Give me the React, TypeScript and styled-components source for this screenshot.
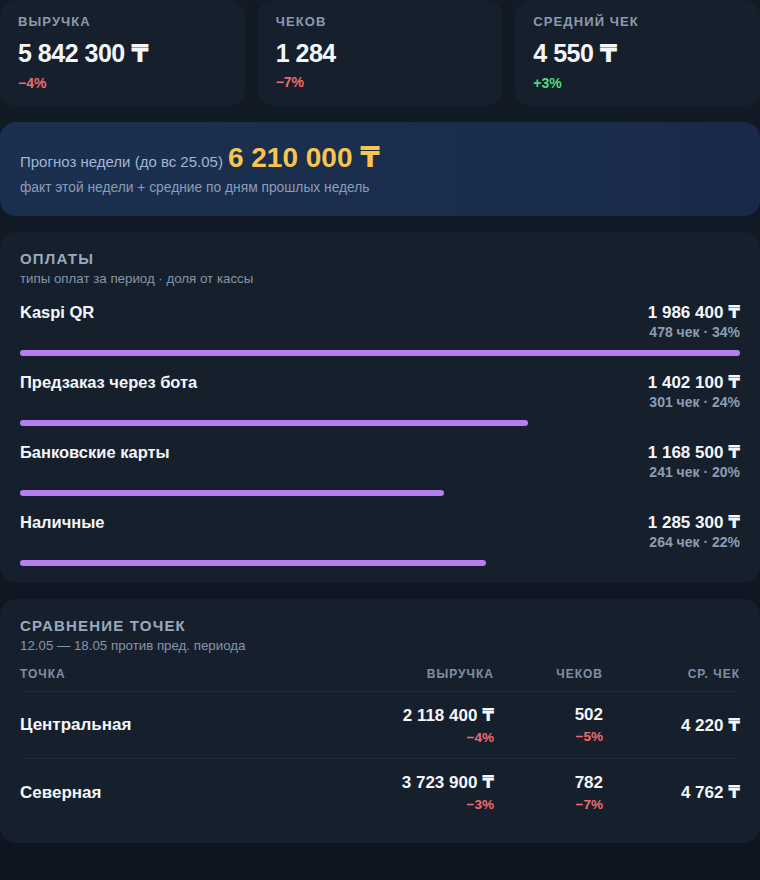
import React from "react";
import styled, { createGlobalStyle } from "styled-components";

const Global = createGlobalStyle`
  html, body { margin: 0; padding: 0; background: #0e1620; }
  body { font-family: "Liberation Sans", Arial, sans-serif; color: #f2f5f9; }
  * { box-sizing: border-box; }
`;

const Page = styled.div`
  width: 760px;
  min-height: 880px;
  background: linear-gradient(180deg, #111a25 0%, #0e1520 100%);
  display: flex;
  flex-direction: column;
  gap: 16px;
`;

const StatsGrid = styled.div`
  display: grid;
  grid-template-columns: repeat(3, 1fr);
  gap: 13px;
`;

const StatCard = styled.div`
  background: #16202c;
  border-radius: 16px;
  height: 106px;
  padding: 14px 18px;
  display: flex;
  flex-direction: column;
`;

const StatLabel = styled.div`
  font-size: 13px;
  font-weight: 700;
  letter-spacing: 1.1px;
  color: #8b9ab0;
  text-transform: uppercase;
  line-height: 16px;
`;

const StatValue = styled.div`
  font-size: 25px;
  font-weight: 700;
  color: #f4f6fa;
  letter-spacing: -0.5px;
  margin-top: 8px;
  line-height: 30px;
`;

const Delta = styled.div<{ $pos?: boolean }>`
  font-size: 14px;
  font-weight: 700;
  color: ${(p) => (p.$pos ? "#4ade80" : "#ef6b6b")};
  margin-top: 6px;
  line-height: 16px;
`;

const Forecast = styled.div`
  background: linear-gradient(90deg, #1b2f4f 0%, #1a2d4c 60%, #19294a 100%);
  border-radius: 16px;
  height: 94px;
  padding: 19px 20px 0;
`;

const ForecastLine = styled.div`
  display: flex;
  align-items: baseline;
  gap: 5px;
`;

const ForecastLabel = styled.span`
  font-size: 15px;
  color: #a3b5d3;
`;

const ForecastValue = styled.span`
  font-size: 28px;
  font-weight: 700;
  color: #f7c550;
`;

const ForecastNote = styled.div`
  font-size: 13.8px;
  color: #8c9db7;
  margin-top: 6px;
`;

const Panel = styled.div`
  background: #16202c;
  border-radius: 16px;
  padding: 18px 20px 17px;
`;

const PanelTitle = styled.div`
  font-size: 15px;
  font-weight: 700;
  letter-spacing: 1.2px;
  color: #9aaabd;
  text-transform: uppercase;
  line-height: 18px;
`;

const PanelSub = styled.div`
  font-size: 13.3px;
  color: #8595aa;
  margin-top: 3px;
  line-height: 16px;
`;

const PayList = styled.div`
  display: flex;
  flex-direction: column;
  gap: 16px;
  margin-top: 15px;
`;

const PayRow = styled.div`
  display: flex;
  flex-direction: column;
`;

const PayHead = styled.div`
  display: flex;
  justify-content: space-between;
  align-items: flex-start;
`;

const PayName = styled.div`
  font-size: 16.5px;
  font-weight: 700;
  color: #f4f6fa;
  line-height: 20px;
`;

const PayNums = styled.div`
  display: flex;
  flex-direction: column;
  align-items: flex-end;
`;

const PayAmount = styled.div`
  font-size: 17px;
  font-weight: 700;
  color: #f4f6fa;
  line-height: 20px;
`;

const PayMeta = styled.div`
  font-size: 14px;
  font-weight: 700;
  color: #8d9cb2;
  line-height: 17px;
  margin-top: 1px;
`;

const Track = styled.div`
  height: 6px;
  margin-top: 9px;
  border-radius: 3px;
`;

const Fill = styled.div`
  height: 100%;
  background: #b77ef0;
  border-radius: 3px;
`;

const TableRow = styled.div<{ $head?: boolean }>`
  display: grid;
  grid-template-columns: 1fr 140px 109px 137px;
  align-items: center;
  ${(p) =>
    p.$head
      ? `padding: 0 0 10px; border-bottom: 1px solid #1f2a37; margin-top: 13px;`
      : `height: 67px; border-bottom: 1px solid #1f2a37; &:last-child { border-bottom: none; }`}
`;

const Th = styled.div<{ $left?: boolean }>`
  font-size: 12px;
  font-weight: 700;
  letter-spacing: 1px;
  color: #7f8fa4;
  text-transform: uppercase;
  text-align: ${(p) => (p.$left ? "left" : "right")};
`;

const PointName = styled.div`
  font-size: 17px;
  font-weight: 700;
  color: #f4f6fa;
`;

const Cell = styled.div`
  display: flex;
  flex-direction: column;
  align-items: flex-end;
`;

const CellVal = styled.div`
  font-size: 17px;
  font-weight: 700;
  color: #f4f6fa;
  line-height: 20px;
`;

const CellDelta = styled.div`
  font-size: 13.5px;
  font-weight: 700;
  color: #ef6b6b;
  line-height: 16px;
  margin-top: 4px;
`;

const Tenge = styled.span`
  font-family: "DejaVu Sans", sans-serif;
`;

const T = () => <Tenge>₸</Tenge>;

const payments = [
  { name: "Kaspi QR", amount: "1 986 400", meta: "478 чек · 34%", v: 1986400 },
  { name: "Предзаказ через бота", amount: "1 402 100", meta: "301 чек · 24%", v: 1402100 },
  { name: "Банковские карты", amount: "1 168 500", meta: "241 чек · 20%", v: 1168500 },
  { name: "Наличные", amount: "1 285 300", meta: "264 чек · 22%", v: 1285300 },
];
const max = 1986400;

const points = [
  { name: "Центральная", rev: "2 118 400", revD: "−4%", cnt: "502", cntD: "−5%", avg: "4 220" },
  { name: "Северная", rev: "3 723 900", revD: "−3%", cnt: "782", cntD: "−7%", avg: "4 762" },
];

export default function App() {
  return (
    <>
      <Global />
      <Page>
        <StatsGrid>
          <StatCard>
            <StatLabel>Выручка</StatLabel>
            <StatValue>5 842 300 <T /></StatValue>
            <Delta>−4%</Delta>
          </StatCard>
          <StatCard>
            <StatLabel>Чеков</StatLabel>
            <StatValue>1 284</StatValue>
            <Delta>−7%</Delta>
          </StatCard>
          <StatCard>
            <StatLabel>Средний чек</StatLabel>
            <StatValue>4 550 <T /></StatValue>
            <Delta $pos>+3%</Delta>
          </StatCard>
        </StatsGrid>

        <Forecast>
          <ForecastLine>
            <ForecastLabel>Прогноз недели (до вс 25.05)</ForecastLabel>
            <ForecastValue>6 210 000 <T /></ForecastValue>
          </ForecastLine>
          <ForecastNote>факт этой недели + средние по дням прошлых недель</ForecastNote>
        </Forecast>

        <Panel>
          <PanelTitle>Оплаты</PanelTitle>
          <PanelSub>типы оплат за период · доля от кассы</PanelSub>
          <PayList>
            {payments.map((p) => (
              <PayRow key={p.name}>
                <PayHead>
                  <PayName>{p.name}</PayName>
                  <PayNums>
                    <PayAmount>{p.amount} <T /></PayAmount>
                    <PayMeta>{p.meta}</PayMeta>
                  </PayNums>
                </PayHead>
                <Track>
                  <Fill style={{ width: `${(p.v / max) * 100}%` }} />
                </Track>
              </PayRow>
            ))}
          </PayList>
        </Panel>

        <Panel>
          <PanelTitle>Сравнение точек</PanelTitle>
          <PanelSub>12.05 — 18.05 против пред. периода</PanelSub>
          <TableRow $head>
            <Th $left>Точка</Th>
            <Th>Выручка</Th>
            <Th>Чеков</Th>
            <Th>Ср. чек</Th>
          </TableRow>
          <div>
            {points.map((r) => (
              <TableRow key={r.name}>
                <PointName>{r.name}</PointName>
                <Cell>
                  <CellVal>{r.rev} <T /></CellVal>
                  <CellDelta>{r.revD}</CellDelta>
                </Cell>
                <Cell>
                  <CellVal>{r.cnt}</CellVal>
                  <CellDelta>{r.cntD}</CellDelta>
                </Cell>
                <Cell>
                  <CellVal>{r.avg} <T /></CellVal>
                </Cell>
              </TableRow>
            ))}
          </div>
        </Panel>
      </Page>
    </>
  );
}
